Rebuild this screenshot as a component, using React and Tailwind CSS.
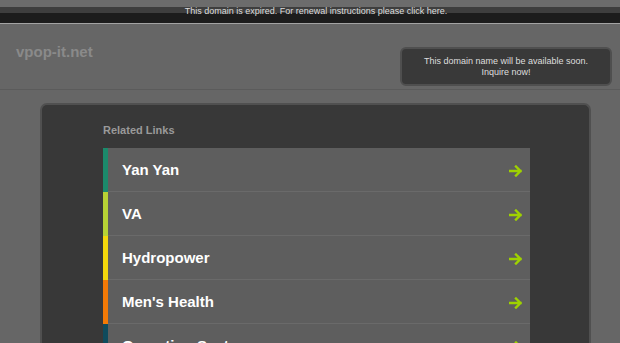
const links = [
  { label: 'Yan Yan', color: 'bg-[#1b8a6b]' },
  { label: 'VA', color: 'bg-[#b7d335]' },
  { label: 'Hydropower', color: 'bg-[#f4d80c]' },
  { label: "Men's Health", color: 'bg-[#f37a06]' },
  { label: 'Operating Systems', color: 'bg-[#0f4b5d]' },
]

function Arrow() {
  return (
    <svg width="14" height="12" viewBox="0 0 14 12" fill="none">
      <path d="M1 6h10.5M7 1.5L11.5 6 7 10.5" stroke="#9fd200" strokeWidth="2.4" strokeLinecap="square" />
    </svg>
  )
}

export default function App() {
  return (
    <div className="w-[620px] h-[343px] overflow-hidden bg-[#666666] font-['Liberation_Sans',Arial,sans-serif]">
      {/* expired notice bar */}
      <div className="h-[24px] flex items-center justify-center pl-[12px] border-b border-[#a3a3a3] bg-[linear-gradient(#6c6c6c_0px,#6c6c6c_7px,#3e3e3e_7px,#3e3e3e_13px,#1c1c1c_13px,#1c1c1c_100%)]">
        <span className="text-[9px] text-[#dcdcdc] mt-[1px]">This domain is expired. For renewal instructions please click here.</span>
      </div>

      {/* header */}
      <div className="h-[66px] flex items-start justify-between border-b border-[#5b5b5b]">
        <div className="pl-[16px] pt-[17px] text-[15px] font-bold text-[#8a8a8a]">vpop-it.net</div>
        <div className="mt-[23px] mr-[8px] w-[212px] h-[39px] rounded-[6px] border-2 border-[#4f4f4f] bg-[#393939] flex flex-col items-center justify-center text-[9px] leading-[11px] text-[#dedede]">
          <span>This domain name will be available soon.</span>
          <span>Inquire now!</span>
        </div>
      </div>

      {/* main panel */}
      <div className="pt-[13px] pl-[40px]">
        <div className="w-[551px] h-[300px] rounded-t-[7px] border-2 border-b-0 border-[#505050] bg-[#383838] pl-[61px] pt-[17px]">
          <div className="text-[11px] font-bold text-[#9a9a9a] h-[26px]">Related Links</div>
          <div className="w-[427px] flex flex-col">
            {links.map((l) => (
              <div key={l.label} className="flex h-[44px] bg-[#5e5e5e]">
                <div className={`w-[5px] ${l.color}`} />
                <div className="flex-1 flex items-center justify-between border-b border-[#6a6a6a] pl-[14px] pr-[7px] pt-[2px]">
                  <span className="text-[15px] font-bold text-white">{l.label}</span>
                  <Arrow />
                </div>
              </div>
            ))}
          </div>
        </div>
      </div>
    </div>
  )
}
